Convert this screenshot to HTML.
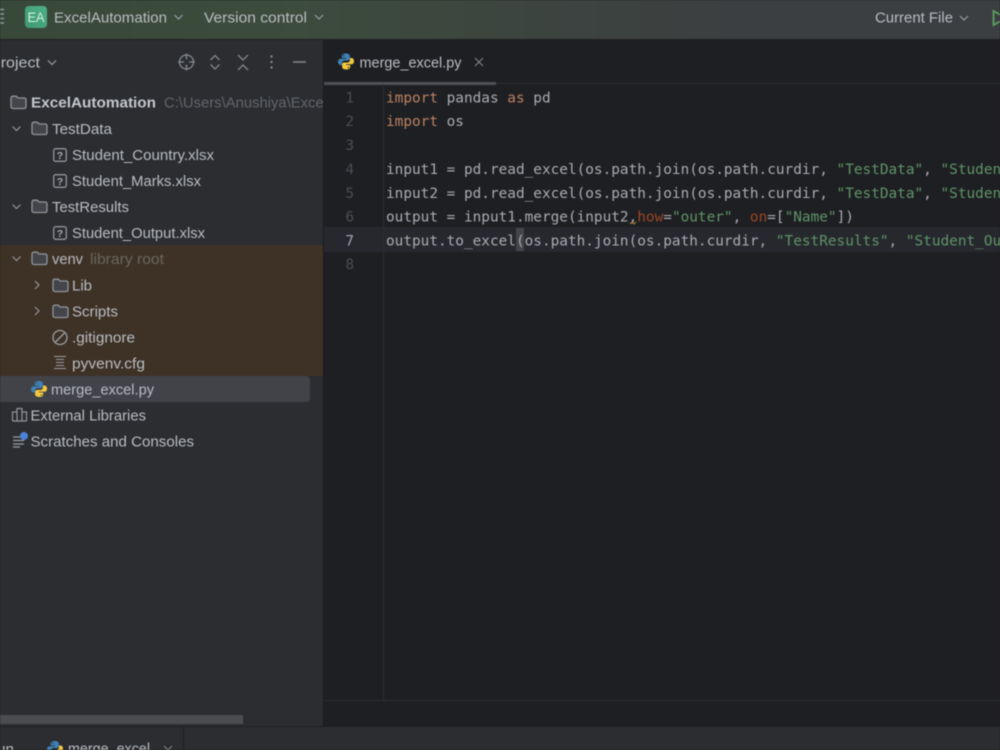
<!DOCTYPE html>
<html><head><meta charset="utf-8"><style>
html,body{margin:0;padding:0;width:1000px;height:750px;overflow:hidden;background:#1e1f22}
svg{display:block;filter:blur(.45px)}
.u{font-family:"Liberation Sans",sans-serif;font-size:14.5px;fill:#b9bcc2}
.m{font-family:"DejaVu Sans Mono","Liberation Mono",monospace;font-size:14.4px;fill:#a9abb1;font-weight:400;white-space:pre}
.k{fill:#b98263}.s{fill:#5f9468}.n{fill:#9c4526}.g{fill:#4a4d53}
</style></head><body>
<svg width="1000" height="750" viewBox="0 0 1000 750" xmlns="http://www.w3.org/2000/svg">
<defs>
<linearGradient id="tb" x1="0" x2="1" y1="0" y2="0"><stop offset="0" stop-color="#394939"/><stop offset=".3" stop-color="#3c4c3d"/><stop offset=".55" stop-color="#3c4440"/><stop offset=".75" stop-color="#3c3f41"/><stop offset="1" stop-color="#3c3f41"/></linearGradient>
<linearGradient id="ea" x1="0" x2="1" y1="1" y2="0"><stop offset="0" stop-color="#3f9a6f"/><stop offset="1" stop-color="#4fb085"/></linearGradient>
<g id="py"><path d="M7.900 0C4.500 0 3.800 1.300 3.800 2.700V4.500H8V5.200H2.600C1 5.200 0 6.500 0 8.300S1 11.500 2.600 11.500H4V9.600C4 8.200 5.100 7 6.500 7H10C11.100 7 11.900 6.200 11.900 5.100V2.700C11.900 1 10.400 0 7.900 0ZM5.600 1.200A.7.7 0 1 1 5.600 2.600 .7.7 0 0 1 5.600 1.200Z" fill="#3f80b5"/><path d="M8.100 16C11.500 16 12.200 14.700 12.200 13.300V11.500H8V10.800H13.400C15 10.800 16 9.500 16 7.700S15 4.500 13.400 4.500H12V6.400C12 7.800 10.900 9 9.500 9H6C4.900 9 4.100 9.800 4.100 10.900V13.300C4.100 15 5.600 16 8.100 16ZM10.400 14.800A.7.7 0 1 1 10.400 13.400 .7.7 0 0 1 10.400 14.800Z" fill="#f4c93e"/></g>
<path id="fo" d="M1 3.200C1 2 1.800 1.200 3 1.200H6.200L8 3H14C15.200 3 16 3.800 16 5V11.500C16 12.700 15.200 13.500 14 13.500H3C1.800 13.500 1 12.700 1 11.500Z" fill="#43454a" stroke="#92959c" stroke-width="1.300"/>
<g id="q"><rect x=".7" y=".7" width="12.600" height="12.600" rx="2" fill="none" stroke="#92959c" stroke-width="1.300"/><text x="7" y="11" text-anchor="middle" font-family="Liberation Sans" font-size="10.500" font-weight="700" fill="#a6a9b0">?</text></g>
<clipPath id="cp"><rect x="0" y="90" width="323" height="30"/></clipPath>
</defs>

<rect width="1000" height="750" fill="#1e1f22"/>
<rect width="1000" height="39" fill="url(#tb)"/>
<rect y="39" width="1000" height="1" fill="#1e1f22"/>

<!-- sidebar -->
<rect y="40" width="323" height="687" fill="#2b2d30"/>
<rect x="323" y="40" width="1" height="687" fill="#1a1b1e"/>
<rect y="245" width="323" height="131" fill="#3e3226"/>
<rect x="-10" y="376" width="320" height="26" rx="4" fill="#414349"/>

<!-- title bar contents -->
<path d="M0 9.500H4M0 14H4M0 18.500H4M0 23H4" stroke="#b4b8bf" stroke-width="1.600" opacity=".7"/>
<rect x="25" y="6" width="22" height="22" rx="4" fill="url(#ea)"/>
<text x="36" y="22" text-anchor="middle" font-family="Liberation Sans" font-size="13.500" fill="#d6f0e4" textLength="17" lengthAdjust="spacingAndGlyphs">EA</text>
<text class="u" x="54" y="22.500" textLength="113" lengthAdjust="spacingAndGlyphs">ExcelAutomation</text>
<path d="M174.500 15L178.500 19L182.500 15" fill="none" stroke="#9a9ea4" stroke-width="1.200"/>
<text class="u" x="204" y="22.500" textLength="103" lengthAdjust="spacingAndGlyphs">Version control</text>
<path d="M315 15L319 19L323 15" fill="none" stroke="#9a9ea4" stroke-width="1.200"/>
<text class="u" x="875" y="22.500" textLength="78" lengthAdjust="spacingAndGlyphs">Current File</text>
<path d="M960 16L964 20L968 16" fill="none" stroke="#9a9ea4" stroke-width="1.200"/>
<path d="M993.500 11V25L1006 18Z" fill="none" stroke="#5f9e62" stroke-width="1.800"/>

<!-- project header -->
<text class="u" x="-10" y="67.500" textLength="50" lengthAdjust="spacingAndGlyphs">Project</text>
<path d="M48 60.500L52 64.500L56 60.500" fill="none" stroke="#9a9ea4" stroke-width="1.200"/>
<g fill="none" stroke="#84888f" stroke-width="1.300">
<circle cx="186.500" cy="62" r="7"/><path d="M186.500 53.500V59.500M186.500 64.500V70.500M178 62H184M189 62H195"/>
<path d="M210.500 60L215 55.500L219.500 60M210.500 64.500L215 69L219.500 64.500"/>
<path d="M238 55L243 60L248 55M238 70L243 65L248 70"/>
<path d="M293 62H306" stroke-width="1.500"/>
</g>
<g fill="#84888f"><circle cx="271.500" cy="56.500" r="1.200"/><circle cx="271.500" cy="62" r="1.200"/><circle cx="271.500" cy="67.500" r="1.200"/></g>

<!-- tree -->
<use href="#fo" x="10" y="95"/>
<text class="u" x="31" y="107.500" font-weight="700" textLength="125" lengthAdjust="spacingAndGlyphs" style="fill:#c4c7cc">ExcelAutomation</text>
<text class="u" x="164" y="107.500" textLength="163" lengthAdjust="spacingAndGlyphs" style="fill:#62656b" clip-path="url(#cp)">C:\Users\Anushiya\Excel</text>

<g fill="none" stroke="#92959c" stroke-width="1.200">
<path d="M12.500 126.500L16.500 130.500L20.500 126.500"/>
<path d="M12.500 204.500L16.500 208.500L20.500 204.500"/>
<path d="M12.500 256.500L16.500 260.500L20.500 256.500"/>
<path d="M35 281L39 285L35 289"/>
<path d="M35 307L39 311L35 315"/>
</g>
<use href="#fo" x="31" y="121"/>
<text class="u" x="52" y="134" textLength="60" lengthAdjust="spacingAndGlyphs">TestData</text>
<use href="#q" x="53" y="148"/>
<text class="u" x="72" y="160" textLength="142" lengthAdjust="spacingAndGlyphs">Student_Country.xlsx</text>
<use href="#q" x="53" y="174"/>
<text class="u" x="72" y="186" textLength="129" lengthAdjust="spacingAndGlyphs">Student_Marks.xlsx</text>
<use href="#fo" x="31" y="199"/>
<text class="u" x="52" y="212" textLength="77" lengthAdjust="spacingAndGlyphs">TestResults</text>
<use href="#q" x="53" y="226"/>
<text class="u" x="72" y="238" textLength="133" lengthAdjust="spacingAndGlyphs">Student_Output.xlsx</text>
<use href="#fo" x="31" y="251"/>
<text class="u" x="52" y="264" textLength="31" lengthAdjust="spacingAndGlyphs">venv</text>
<text class="u" x="90" y="264" textLength="74" lengthAdjust="spacingAndGlyphs" style="fill:#6a655d">library root</text>
<use href="#fo" x="52" y="278"/>
<text class="u" x="72" y="290.500" textLength="20" lengthAdjust="spacingAndGlyphs">Lib</text>
<use href="#fo" x="52" y="304"/>
<text class="u" x="72" y="316.500" textLength="46" lengthAdjust="spacingAndGlyphs">Scripts</text>
<circle cx="60" cy="337.500" r="7" fill="none" stroke="#9a9ea4" stroke-width="1.300"/><path d="M55.500 342L64.500 333" stroke="#9a9ea4" stroke-width="1.300"/>
<text class="u" x="72" y="342.500" textLength="63" lengthAdjust="spacingAndGlyphs">.gitignore</text>
<path d="M54 356.500H66M56 359.500H64M56 362.500H64M56 365.500H64M54 368.500H66" stroke="#9a9ea4" stroke-width="1.100"/>
<text class="u" x="72" y="368.500" textLength="73" lengthAdjust="spacingAndGlyphs">pyvenv.cfg</text>
<use href="#py" x="31" y="381"/>
<text class="u" x="51" y="394.500" textLength="103" lengthAdjust="spacingAndGlyphs">merge_excel.py</text>
<g fill="none" stroke="#92959c" stroke-width="1.200"><path d="M12.500 421V412H17V421M17 421V408.500H22V421M22 421V412H26.500V421M12.500 421H26.500"/></g>
<text class="u" x="30.500" y="420.500" textLength="115.500" lengthAdjust="spacingAndGlyphs">External Libraries</text>
<path d="M13 437H21M13 440.500H24M13 444H24M13 447H20" stroke="#9a9ea4" stroke-width="1.200"/>
<circle cx="24" cy="436" r="4" fill="#4a82d8"/>
<text class="u" x="30.500" y="446.500" textLength="163.500" lengthAdjust="spacingAndGlyphs">Scratches and Consoles</text>
<rect y="715" width="243" height="9" fill="#4b4c4f"/>

<!-- tabs -->
<rect x="324" y="83" width="676" height="1" fill="#2b2d30"/>
<use href="#py" x="338" y="53.500"/>
<text class="u" x="359.500" y="67.500" textLength="102" lengthAdjust="spacingAndGlyphs">merge_excel.py</text>
<path d="M475 58L483 66M483 58L475 66" stroke="#7c7f85" stroke-width="1.200"/>
<rect x="324" y="82" width="172" height="3" fill="#4e5157"/>

<!-- editor -->
<rect x="324" y="227" width="676" height="25" fill="#26282e"/>
<rect x="383" y="84" width="1" height="616" fill="#2b2d30"/>
<rect x="324" y="700" width="676" height="1" fill="#2b2d30"/>
<rect x="516" y="228" width="8" height="23" fill="#43454a"/>

<text class="m g" x="354" y="102.500" text-anchor="end">1</text>
<text class="m g" x="354" y="126" text-anchor="end">2</text>
<text class="m g" x="354" y="150" text-anchor="end">3</text>
<text class="m g" x="354" y="174" text-anchor="end">4</text>
<text class="m g" x="354" y="198" text-anchor="end">5</text>
<text class="m g" x="354" y="221.500" text-anchor="end">6</text>
<text class="m" x="354" y="245.500" text-anchor="end" style="fill:#a1a3ab">7</text>
<text class="m g" x="354" y="269" text-anchor="end">8</text>

<text class="m" x="386" y="102.500"><tspan class="k">import</tspan> pandas <tspan class="k">as</tspan> pd</text>
<text class="m" x="386" y="126"><tspan class="k">import</tspan> os</text>
<text class="m" x="386" y="174">input1 = pd.read_excel(os.path.join(os.path.curdir, <tspan class="s">"TestData"</tspan>, <tspan class="s">"Student_Country.xlsx"</tspan>))</text>
<text class="m" x="386" y="198">input2 = pd.read_excel(os.path.join(os.path.curdir, <tspan class="s">"TestData"</tspan>, <tspan class="s">"Student_Marks.xlsx"</tspan>))</text>
<text class="m" x="386" y="221.500">output = input1.merge(input2,<tspan class="n">how</tspan>=<tspan class="s">"outer"</tspan>, <tspan class="n">on</tspan>=[<tspan class="s">"Name"</tspan>])</text>
<text class="m" x="386" y="245.500">output.to_excel(os.path.join(os.path.curdir, <tspan class="s">"TestResults"</tspan>, <tspan class="s">"Student_Output.xlsx"</tspan>))</text>
<path d="M630 224L632 222L634 224L636 222" fill="none" stroke="#a5803c" stroke-width="1"/>

<!-- bottom panel -->
<rect y="726" width="1000" height="24" fill="#2b2d30"/>
<rect y="726" width="1000" height="1" fill="#1e1f22"/>
<rect x="183" y="727" width="1" height="23" fill="#1e1f22"/>
<text class="u" x="-14" y="754" textLength="28" lengthAdjust="spacingAndGlyphs">Run</text>
<use href="#py" x="47" y="741"/>
<text class="u" x="68" y="753.500" textLength="82" lengthAdjust="spacingAndGlyphs">merge_excel</text>
<path d="M164 746L168 750L172 746" fill="none" stroke="#7c7f85" stroke-width="1.200"/>
</svg>
</body></html>
